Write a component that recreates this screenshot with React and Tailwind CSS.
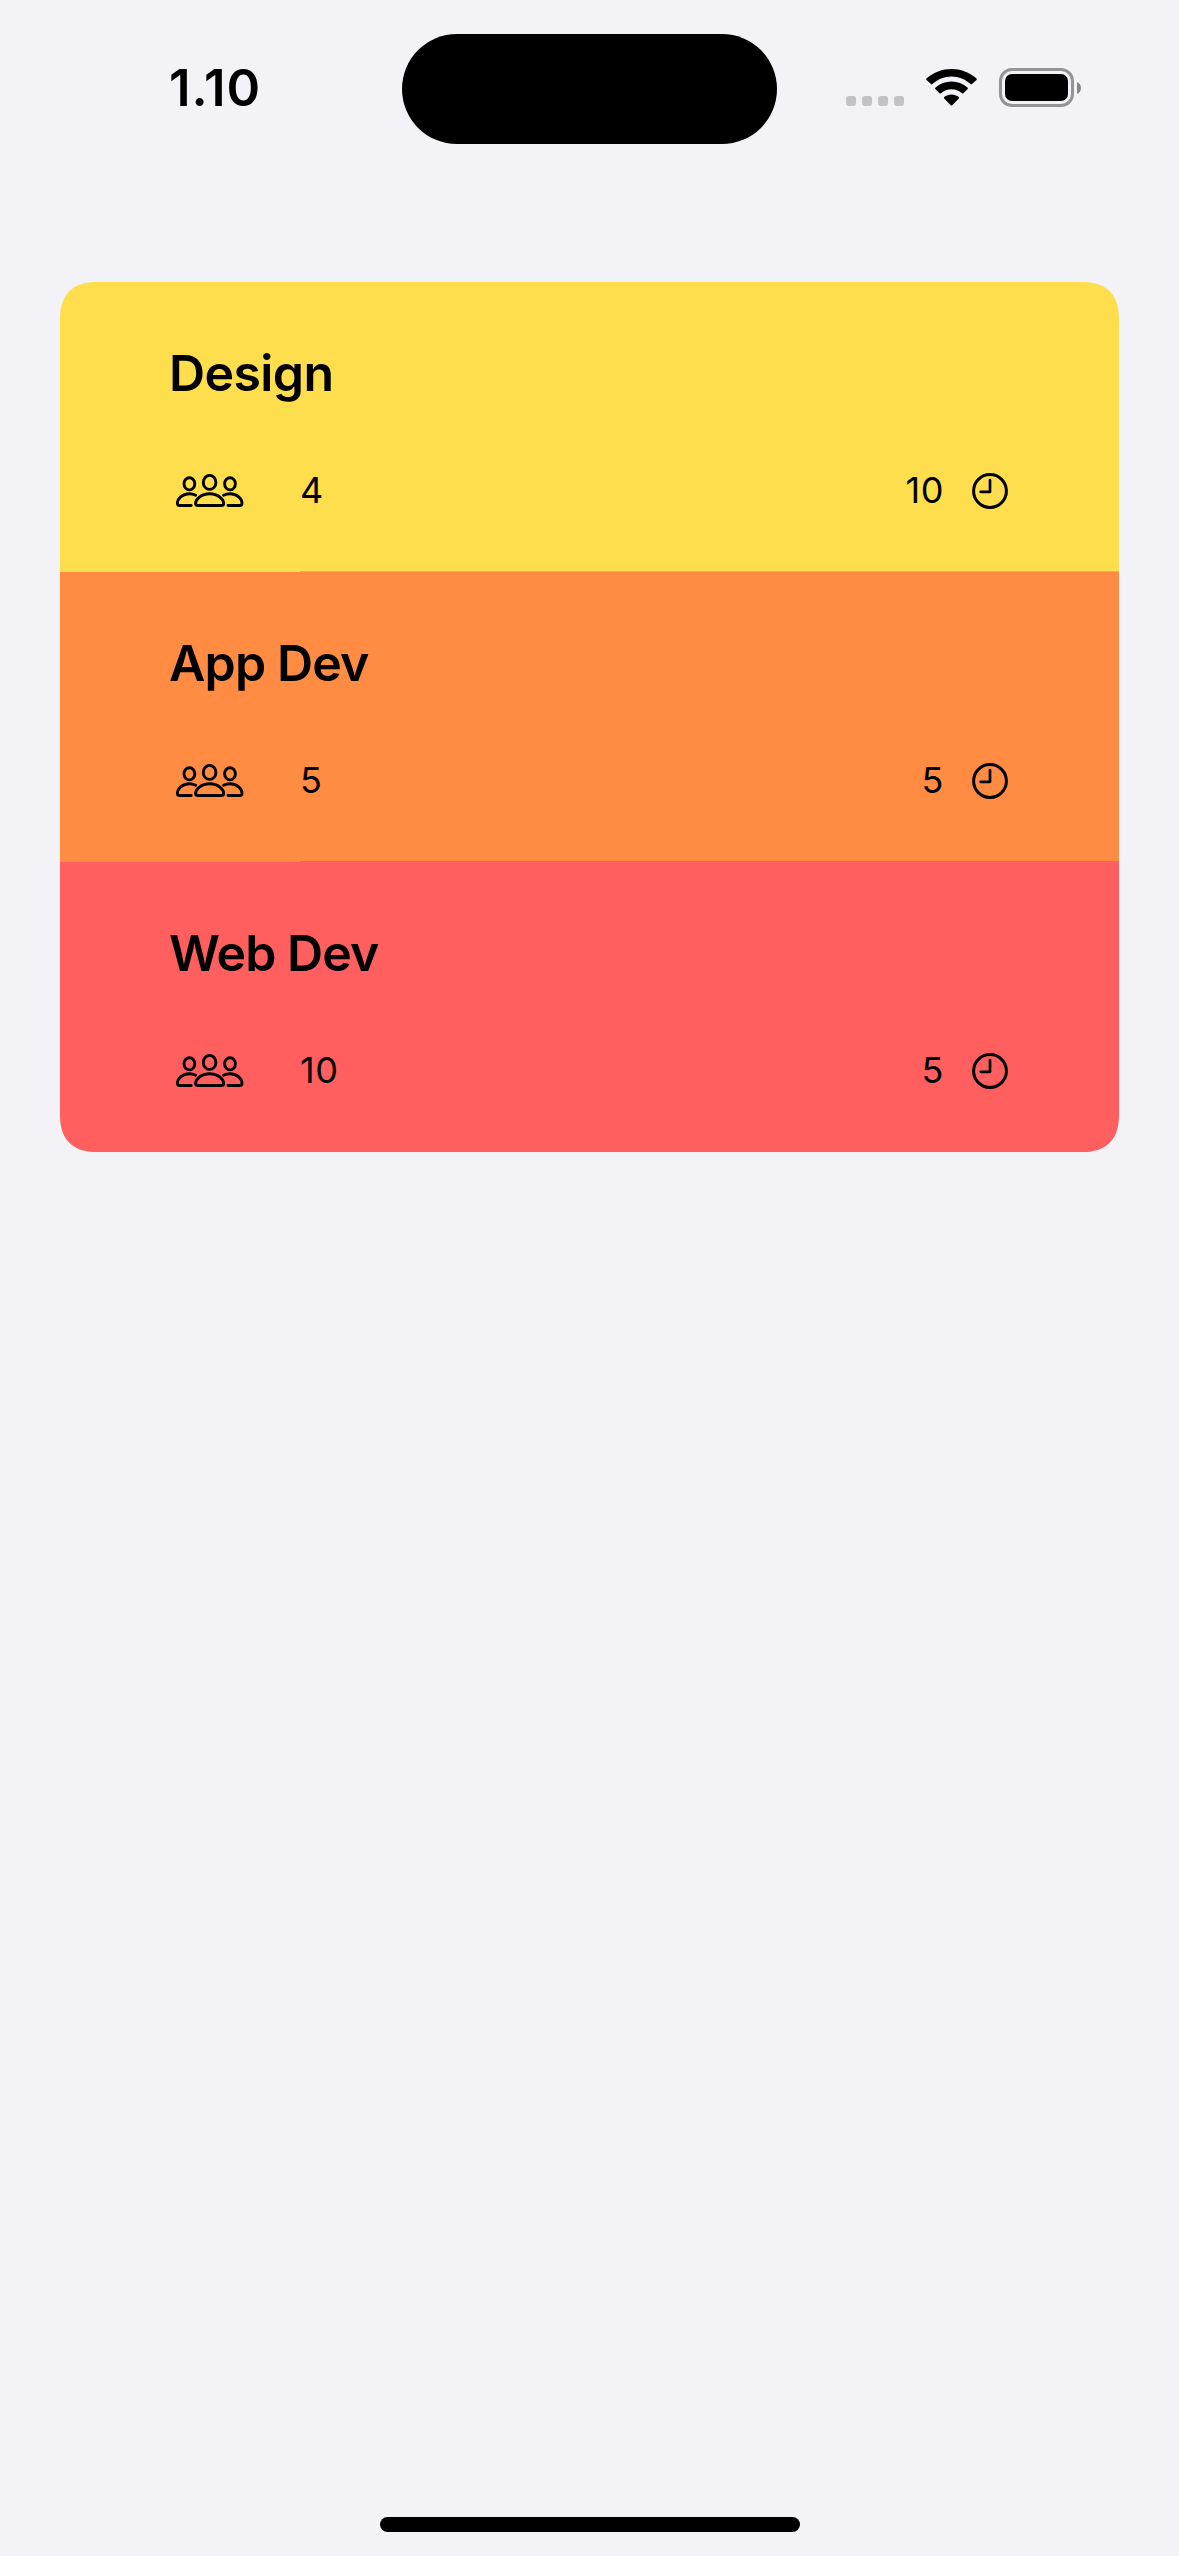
const ROWS = [
  { title: "Design", people: 4, minutes: 10, bg: "bg-[#ffde4d]", line: "bg-[#d3b950]", spacing: "tracking-[-0.6px]" },
  { title: "App Dev", people: 5, minutes: 5, bg: "bg-[#ff8c42]", line: "bg-[#d37a46]", spacing: "tracking-[-0.85px]" },
  { title: "Web Dev", people: 10, minutes: 5, bg: "bg-[#ff5f5f]", line: "bg-[#ff5f5f]", spacing: "tracking-[-0.95px]" },
];

function PeopleIcon() {
  return (
    <svg className="h-[34px] w-[68px]" viewBox="0 0 68 34" fill="none" stroke="black" strokeWidth="2.9" strokeLinecap="round" strokeLinejoin="round">
      <ellipse cx="13.4" cy="9.8" rx="5.4" ry="6.1" />
      <ellipse cx="33.6" cy="8.4" rx="6.3" ry="7" />
      <ellipse cx="54" cy="9.8" rx="5.4" ry="6.1" />
      <path d="M19.6 21.2C17.8 20.3 16 19.7 13.4 19.7C6 19.7 1.4 25 1.4 29.2C1.4 30.8 2 31.5 3.6 31.5H15.2" />
      <path d="M47.6 21.2C49.4 20.3 51.4 19.7 54 19.7C61.4 19.7 66 25 66 29.2C66 30.8 65.4 31.5 63.8 31.5H52" />
      <path d="M22.2 31.5H45.2C47 31.5 47.7 30.7 47.7 29.4C47.7 25.4 42.3 19.7 33.7 19.7C25 19.7 19.6 25.4 19.6 29.4C19.6 30.7 20.4 31.5 22.2 31.5Z" />
    </svg>
  );
}

function ClockIcon() {
  return (
    <svg className="h-9 w-9" viewBox="0 0 36 36" fill="none" stroke="black" strokeWidth="3" strokeLinecap="round" strokeLinejoin="round">
      <circle cx="18" cy="18" r="16.4" />
      <path d="M18 7.2V18.8H8.6" strokeWidth="2.7" />
    </svg>
  );
}

function WifiIcon() {
  return (
    <svg className="h-[37px] w-[51px]" viewBox="0 0 51 37">
      <path d="M25.5 7.4C32.8 7.4 39.5 10.2 44.6 15.1C45 15.5 45.6 15.5 46 15.1L50.5 11C50.9 10.6 50.9 10 50.5 9.6C36.6-3.2 14.4-3.2.5 9.6C.1 10 .1 10.6.5 11L5 15.1C5.4 15.5 6 15.5 6.4 15.1C11.5 10.2 18.2 7.4 25.5 7.4Z" />
      <path d="M25.5 20.2C29.4 20.2 33.1 21.6 36 24.2C36.4 24.6 37 24.6 37.4 24.2L41.7 20.1C42.1 19.7 42.1 19.1 41.7 18.7C32.6 10.5 18.4 10.5 9.3 18.7C8.9 19.1 8.9 19.7 9.3 20.1L13.6 24.2C14 24.6 14.6 24.6 15 24.2C17.9 21.6 21.6 20.2 25.5 20.2Z" />
      <path d="M32.8 28.1C33.2 28.5 33.2 29.1 32.8 29.5L26.2 36.3C25.8 36.7 25.2 36.7 24.8 36.3L18.2 29.5C17.8 29.1 17.8 28.5 18.2 28.1C22.4 24.7 28.6 24.7 32.8 28.1Z" />
    </svg>
  );
}

function StatusBar() {
  return (
    <header className="flex h-[177px] items-start text-black">
      <div className="w-[402px] pt-[58px] pl-[169px] text-[51px] leading-[60px] font-semibold tracking-[0.9px]">1.10</div>
      <div className="mt-[34px] h-[110px] w-[375px] rounded-full bg-black" />
      <div className="flex items-start pt-[68px] pl-[69px]">
        <div className="mt-7 flex gap-1.5">
          {[0, 1, 2, 3].map((dot) => (
            <span key={dot} className="h-2.5 w-2.5 rounded-[3px] bg-[#c3c2c7]" />
          ))}
        </div>
        <div className="mt-px ml-[22px]">
          <WifiIcon />
        </div>
        <div className="ml-[22px] flex items-center">
          <div className="h-[39px] w-[75px] rounded-[13px] border-3 border-[#949397] p-[3px]">
            <div className="h-full w-full rounded-[7px] bg-black" />
          </div>
          <svg className="ml-[3px] h-3 w-1" viewBox="0 0 4 12">
            <path d="M0 0C2.4 1 4 3.3 4 6S2.4 11 0 12Z" fill="#858488" />
          </svg>
        </div>
      </div>
    </header>
  );
}

function Row({ row }) {
  return (
    <li className={`flex h-[290px] flex-col ${row.bg}`}>
      <h2 className={`mt-[61px] ml-[109px] text-[50px] leading-[60px] font-semibold ${row.spacing}`}>{row.title}</h2>
      <div className="mt-[62px] flex h-[52px] items-center pr-[111px] pl-[116px] text-[36px] leading-[50px] tracking-[0.6px]">
        <PeopleIcon />
        <span className="mb-0.5 ml-[56px]">{row.people}</span>
        <span className="mr-[28px] mb-0.5 ml-auto">{row.minutes}</span>
        <ClockIcon />
      </div>
      <div className={`mt-auto ml-60 h-px ${row.line}`} />
    </li>
  );
}

export default function App() {
  return (
    <div className="flex h-[2556px] w-[1179px] flex-col bg-[#f2f2f7] font-[Inter,sans-serif] text-black">
      <StatusBar />
      <ul className="mx-[60px] mt-[105px] overflow-hidden rounded-[38px] [corner-shape:superellipse(1.3)]">
        {ROWS.map((row) => (
          <Row key={row.title} row={row} />
        ))}
      </ul>
      <div className="mt-auto mb-6 ml-[380px] h-[15px] w-[420px] rounded-full bg-black" />
    </div>
  );
}
